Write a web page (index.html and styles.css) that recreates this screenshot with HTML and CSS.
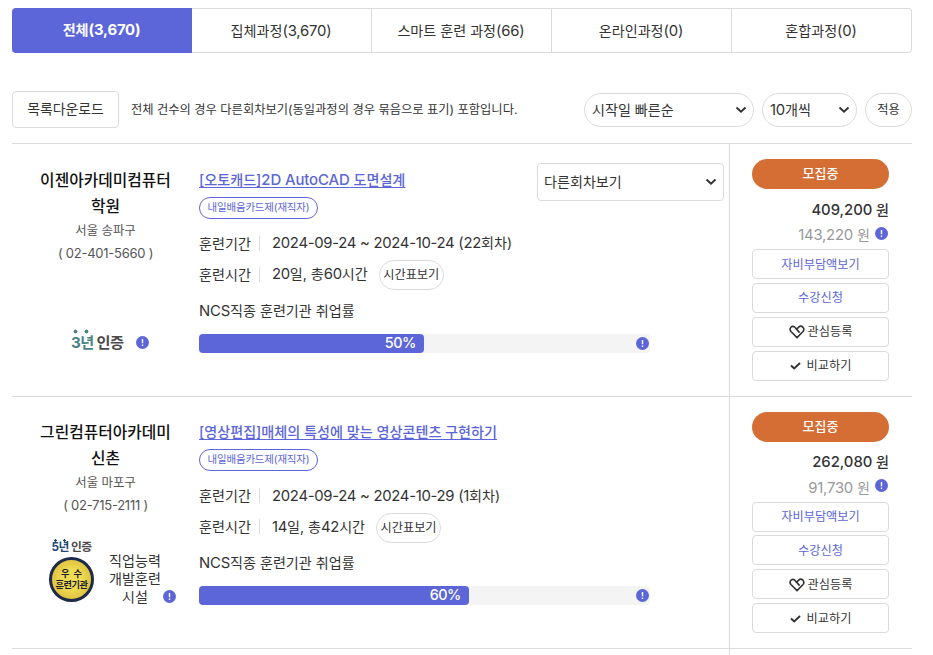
FILE: index.html
```html
<!DOCTYPE html>
<html lang="ko">
<head>
  <meta charset="UTF-8" />
  <meta name="viewport" content="width=device-width, initial-scale=1.0" />
  <title>훈련과정 검색</title>
  <link rel="stylesheet" href="styles.css">
</head>
<body>
  <!-- shared icons -->
  <svg class="sprite" width="0" height="0">
    <symbol id="i-info" viewBox="0 0 13 13">
      <circle cx="6.5" cy="6.5" r="6.5" fill="#5c66d8"/>
      <path d="M6.5 3v4.2M6.5 8.6v1.4" stroke="#fff" stroke-width="1.4"/>
    </symbol>
    <symbol id="i-arrow" viewBox="0 0 12 8">
      <path d="M1.5 1.5 6 5.7l4.500-4.200" fill="none" stroke="#333" stroke-width="2"/>
    </symbol>
    <symbol id="i-heart" viewBox="0 0 16 14">
      <path d="M10.600 7.600 6.200 2.600C5 1.100 3.200 1 2 2.200.8 3.600.9 5.400 2.200 6.800L8 12.600l5.800-5.800C15 5.400 15 3.400 13.800 2.100 12.600.9 10.800 1 9.700 2.100L7.600 4.300" fill="none" stroke="#333" stroke-width="1.600" stroke-linejoin="round"/>
    </symbol>
    <symbol id="i-check" viewBox="0 0 11 8">
      <path d="M1 3.500 4.200 6.500 10 1" fill="none" stroke="#333" stroke-width="2"/>
    </symbol>
  </svg>

  <ul class="tabs">
    <li class="active">전체<span class="n">(3,670)</span></li>
    <li>집체과정<span class="n">(3,670)</span></li>
    <li>스마트 훈련 과정<span class="n">(66)</span></li>
    <li>온라인과정<span class="n">(0)</span></li>
    <li>혼합과정<span class="n">(0)</span></li>
  </ul>

  <div class="toolbar">
    <button class="btn-down">목록다운로드</button>
    <p class="notice">전체 건수의 경우 다른회차보기(동일과정의 경우 묶음으로 표기) 포함입니다.</p>
    <div class="sort">
      <button class="select round w170">시작일 빠른순<svg class="arrow"><use href="#i-arrow"/></svg></button>
      <button class="select round w95"><span><span class="n">10</span>개씩</span><svg class="arrow"><use href="#i-arrow"/></svg></button>
      <button class="btn-apply">적용</button>
    </div>
  </div>

  <div class="list">
    <div class="card">
      <div class="org">
        <strong>이젠아카데미컴퓨터<br>학원</strong>
        <p>서울 송파구</p>
        <p class="tel">( 02-401-5660 )</p>
        <div class="cert cert-3">
          <div class="mark teal"><em>3년</em> 인증</div>
          <svg class="info"><use href="#i-info"/></svg>
        </div>
      </div>
      <div class="course">
        <div class="head">
          <div>
            <a class="title" href="#">[오토캐드]<span class="n">2D AutoCAD</span> 도면설계</a>
            <span class="tag">내일배움카드제(재직자)</span>
          </div>
          <button class="select other">다른회차보기<svg class="arrow"><use href="#i-arrow"/></svg></button>
        </div>
        <dl>
          <dt>훈련기간</dt>
          <dd><span class="n">2024-09-24 ~ 2024-10-24 (22</span>회차)</dd>
        </dl>
        <dl>
          <dt>훈련시간</dt>
          <dd><span class="n">20</span>일, 총<span class="n">60</span>시간 <button class="btn-time">시간표보기</button></dd>
        </dl>
        <p class="rate-label"><span class="n">NCS</span>직종 훈련기관 취업률</p>
        <div class="bar">
          <div class="fill" style="width: 50%">50%</div>
          <svg class="info"><use href="#i-info"/></svg>
        </div>
      </div>
      <div class="side">
        <span class="status">모집중</span>
        <p class="price"><span class="n">409,200</span> 원</p>
        <p class="self"><span><span class="n">143,220</span> 원</span><svg class="info"><use href="#i-info"/></svg></p>
        <button class="act blue">자비부담액보기</button>
        <button class="act blue">수강신청</button>
        <button class="act"><svg class="heart"><use href="#i-heart"/></svg>관심등록</button>
        <button class="act"><svg class="check"><use href="#i-check"/></svg>비교하기</button>
      </div>
    </div>

    <div class="card">
      <div class="org">
        <strong>그린컴퓨터아카데미<br>신촌</strong>
        <p>서울 마포구</p>
        <p class="tel">( 02-715-2111 )</p>
        <div class="cert cert-5">
          <div class="medal-box">
            <div class="mark navy"><em>5년</em> 인증</div>
            <div class="medal"><span class="wide">우수</span><span>훈련기관</span></div>
          </div>
          <span class="facility">직업능력<br>개발훈련<br>시설</span>
          <svg class="info"><use href="#i-info"/></svg>
        </div>
      </div>
      <div class="course">
        <div class="head">
          <div>
            <a class="title" href="#">[영상편집]매체의 특성에 맞는 영상콘텐츠 구현하기</a>
            <span class="tag">내일배움카드제(재직자)</span>
          </div>
        </div>
        <dl>
          <dt>훈련기간</dt>
          <dd><span class="n">2024-09-24 ~ 2024-10-29 (1</span>회차)</dd>
        </dl>
        <dl>
          <dt>훈련시간</dt>
          <dd><span class="n">14</span>일, 총<span class="n">42</span>시간 <button class="btn-time">시간표보기</button></dd>
        </dl>
        <p class="rate-label"><span class="n">NCS</span>직종 훈련기관 취업률</p>
        <div class="bar">
          <div class="fill" style="width: 60%">60%</div>
          <svg class="info"><use href="#i-info"/></svg>
        </div>
      </div>
      <div class="side">
        <span class="status">모집중</span>
        <p class="price"><span class="n">262,080</span> 원</p>
        <p class="self"><span><span class="n">91,730</span> 원</span><svg class="info"><use href="#i-info"/></svg></p>
        <button class="act blue">자비부담액보기</button>
        <button class="act blue">수강신청</button>
        <button class="act"><svg class="heart"><use href="#i-heart"/></svg>관심등록</button>
        <button class="act"><svg class="check"><use href="#i-check"/></svg>비교하기</button>
      </div>
    </div>

    <div class="card next">
      <div class="org"></div>
      <div class="course"></div>
      <div class="side"></div>
    </div>
  </div>
</body>
</html>
```

FILE: styles.css
```css
:root {
  --main: #5c66d8;
  --line: #dbdbdb;
  --text: #333;
  --orange: #d46e35;
}

* {
  box-sizing: border-box;
  margin: 0;
  padding: 0;
}

body {
  width: 924px;
  padding: 8px 12px 0;
  background-color: #fff;
  color: var(--text);
  font-family: Inter, 'Noto Sans CJK KR', sans-serif;
  font-size: 14.1px;
  line-height: 20px;
}

button {
  display: flex;
  align-items: center;
  justify-content: center;
  border: 1px solid var(--line);
  border-radius: 4px;
  background-color: #fff;
  color: var(--text);
  font: inherit;
  white-space: nowrap;
}

.sprite {
  position: absolute;
}

/* latin and digits run a little larger than hangul */
.n {
  font-size: 1.056em;
  letter-spacing: -0.2px;
}

.info {
  flex: none;
  width: 13px;
  height: 13px;
}

.arrow {
  flex: none;
  width: 12px;
  height: 8px;
}

/* tabs */
.tabs {
  display: flex;
  height: 45px;
  list-style: none;
}

.tabs li {
  display: flex;
  flex: none;
  align-items: center;
  justify-content: center;
  width: 20%;
  padding-right: 1px;
  border: 1px solid var(--line);
  border-left: none;
}

.tabs li:last-child {
  border-radius: 0 4px 4px 0;
}

.tabs .active {
  padding-bottom: 2px;
  border: none;
  border-radius: 4px 0 0 4px;
  background-color: var(--main);
  color: #fff;
  font-weight: 700;
}

/* toolbar */
.toolbar {
  display: flex;
  align-items: center;
  height: 37px;
  margin-top: 38px;
}

.btn-down {
  width: 107px;
  height: 37px;
  padding-bottom: 2px;
  font-size: 13.9px;
}

.notice {
  margin-left: 12px;
  font-size: 12.28px;
}

.sort {
  display: flex;
  gap: 8px;
  margin-left: auto;
}

.select {
  justify-content: space-between;
  height: 34px;
  padding: 0 6px 0 7px;
}

.round {
  border-radius: 17px;
}

.w170 {
  width: 170px;
}

.w95 {
  width: 95px;
}

.btn-apply {
  width: 47px;
  height: 34px;
  border-radius: 17px;
  font-size: 12.2px;
}

/* list */
.list {
  margin-top: 15.2px;
}

.card {
  display: flex;
  height: 252.5px;
  border-top: 1px solid var(--line);
}

.next {
  height: 7px;
}

.org {
  width: 187px;
  padding-top: 23.4px;
  text-align: center;
}

.org strong {
  display: block;
  color: #111;
  font-size: 15.8px;
  font-weight: 500;
  line-height: 26px;
}

.org p {
  color: #555;
  font-size: 12.4px;
  line-height: 22.2px;
}

.org .tel {
  font-size: 13px;
  letter-spacing: -0.25px;
}

.cert {
  display: flex;
}

.cert-3 {
  align-items: center;
  gap: 13px;
  margin-top: 65px;
  padding-left: 59px;
}

.cert-3 .info {
  margin-top: 4px;
}

.mark {
  color: #4a4a4a;
  font-size: 15.2px;
  font-weight: 700;
  letter-spacing: -0.6px;
  white-space: nowrap;
}

.mark em {
  display: inline-block;
  font-style: normal;
  background-repeat: no-repeat;
}

.teal em {
  padding-top: 4px;
  color: #4b8285;
  background-image: radial-gradient(circle, #4b8285 1.7px, transparent 2.2px), radial-gradient(circle, #4b8285 1.7px, transparent 2.2px);
  background-size: 5px 5px;
  background-position: 2px 0, 13px 0;
}

.cert-5 {
  align-items: flex-end;
  margin-top: 22.4px;
  padding-left: 37px;
}

.medal-box {
  display: flex;
  flex-direction: column;
  align-items: center;
  width: 45px;
}

.navy {
  font-size: 11.8px;
  font-weight: 700;
  line-height: 12px;
  letter-spacing: -0.6px;
}

.navy em {
  padding-top: 2px;
  color: #1f4a78;
  background-image: radial-gradient(circle, #1f4a78 1px, transparent 1.5px), radial-gradient(circle, #1f4a78 1px, transparent 1.5px);
  background-size: 3px 3px;
  background-position: 2px 0, 11px 0;
}

.medal {
  display: flex;
  flex-direction: column;
  align-items: center;
  justify-content: center;
  width: 45px;
  height: 45px;
  margin-top: 4px;
  border: 3px solid #1e2a4a;
  border-radius: 50%;
  background: radial-gradient(circle, #efdc55 35%, #d3b02f 100%);
  color: #1b1b2b;
  font-size: 9.2px;
  font-weight: 700;
  line-height: 11px;
  letter-spacing: -0.4px;
  white-space: nowrap;
}

.medal .wide {
  letter-spacing: 4px;
  margin-right: -4px;
}

.facility {
  width: 52px;
  margin-left: 15px;
  margin-bottom: -4px;
  line-height: 18px;
}

.cert-5 .info {
  margin-left: 2px;
  margin-bottom: -1px;
}

/* course */
.course {
  width: 530px;
  padding: 19px 5px 0 0;
}

.head {
  display: flex;
  justify-content: space-between;
  height: 64.8px;
}

.title {
  display: block;
  margin-top: 6.4px;
  color: var(--main);
  font-size: 14.12px;
  font-weight: 500;
  text-decoration: underline;
  text-underline-offset: 2px;
}

.title .n {
  letter-spacing: -0.1px;
}

.tag {
  display: inline-flex;
  align-items: center;
  justify-content: center;
  width: 119px;
  height: 22px;
  margin-top: 7px;
  border: 1px solid var(--main);
  border-radius: 11px;
  color: var(--main);
  font-size: 10.5px;
  letter-spacing: -0.2px;
}

.other {
  width: 187px;
  height: 38px;
  padding-left: 6px;
}

dl {
  display: flex;
  align-items: center;
  height: 31px;
}

dt {
  width: 61px;
  height: 15px;
  border-right: 1px solid var(--line);
  line-height: 15px;
}

dd {
  display: flex;
  align-items: center;
  margin-left: 12px;
  white-space: pre;
}

dd .n {
  letter-spacing: -0.3px;
}

.btn-time {
  width: 65px;
  height: 30px;
  margin-top: 2px;
  margin-left: 7px;
  border-radius: 15px;
  font-size: 12.2px;
}

.rate-label {
  margin-top: 10.6px;
}

.bar {
  display: flex;
  align-items: center;
  justify-content: space-between;
  width: 450.5px;
  height: 19px;
  margin-top: 13px;
  border-radius: 4px;
  background-color: #f4f4f4;
}

.fill {
  height: 19px;
  padding-right: 8.5px;
  border-radius: 4px;
  background-color: var(--main);
  color: #fff;
  font-size: 14.4px;
  font-weight: 500;
  line-height: 18px;
  letter-spacing: -0.5px;
  text-align: right;
}

.bar .info {
  margin-right: 1px;
}

/* side */
.side {
  width: 183px;
  padding: 15px 23px 0 22px;
  border-left: 1px solid var(--line);
}

.status {
  display: flex;
  align-items: center;
  justify-content: center;
  height: 30px;
  padding-bottom: 2px;
  border-radius: 15px;
  background-color: var(--orange);
  color: #fff;
  font-size: 13px;
  font-weight: 500;
}

.price {
  margin-top: 7.6px;
  font-weight: 500;
  line-height: 25px;
  text-align: right;
}

.price .n {
  letter-spacing: -0.05px;
}

.self {
  display: flex;
  align-items: center;
  justify-content: flex-end;
  gap: 5px;
  height: 25px;
  margin-bottom: 1.4px;
  padding-right: 1px;
  color: #999;
}

.self .info {
  margin-bottom: 4px;
}

.act {
  width: 137px;
  height: 30px;
  margin-bottom: 3.8px;
  padding-top: 1px;
  font-size: 12.2px;
}

.blue {
  color: var(--main);
}

.heart {
  width: 16px;
  height: 14px;
  margin-right: 3px;
}

.check {
  width: 11px;
  height: 8px;
  margin-right: 6px;
}
```
